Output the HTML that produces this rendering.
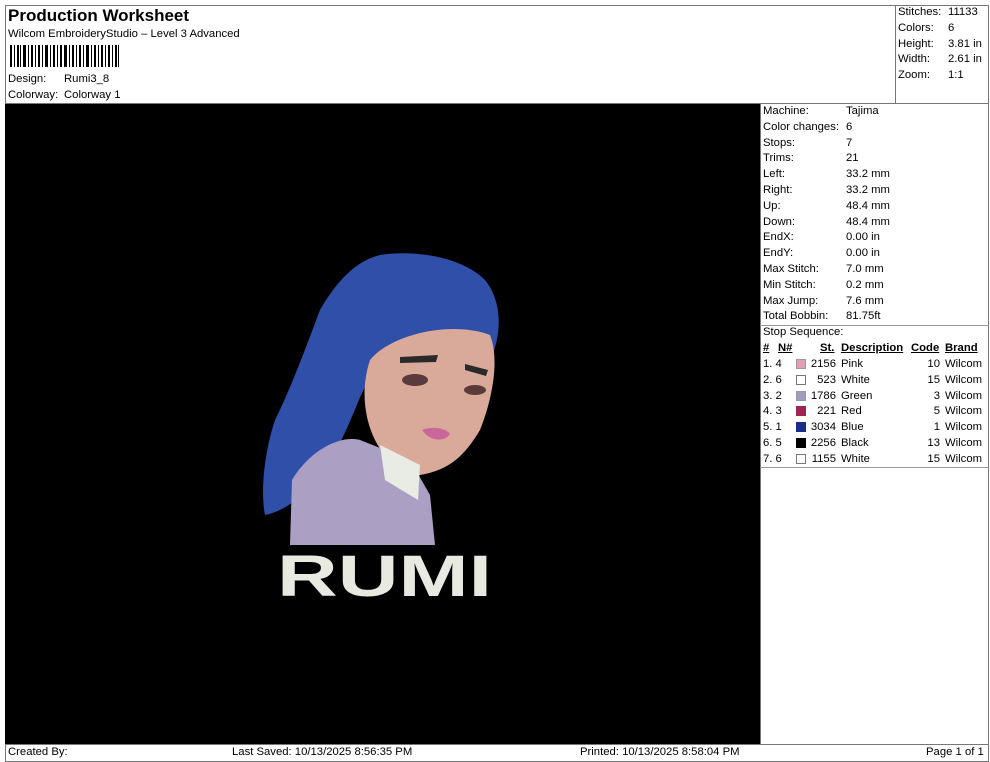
<!DOCTYPE html>
<html><head><meta charset="utf-8"><style>
*{margin:0;padding:0;box-sizing:border-box}
body{width:990px;height:762px;background:#fff;font-family:"Liberation Sans",sans-serif;color:#000;position:relative;overflow:hidden;font-size:11.3px}
.a{position:absolute;white-space:nowrap}
</style></head><body>
<div class="a" style="left:5px;top:5px;width:984px;height:757px;border:1px solid #777"></div>
<div class="a" style="left:8px;top:6px;font-size:17px;font-weight:bold">Production Worksheet</div>
<div class="a" style="left:8px;top:28px">Wilcom EmbroideryStudio – Level 3 Advanced</div>
<svg class="a" style="left:10px;top:45px" width="110" height="22">
<g fill="#000">
<rect x="0" y="0" width="2" height="22"/><rect x="4" y="0" width="1" height="22"/><rect x="7" y="0" width="2" height="22"/><rect x="10" y="0" width="1" height="22"/><rect x="13" y="0" width="3" height="22"/><rect x="18" y="0" width="1" height="22"/><rect x="21" y="0" width="2" height="22"/><rect x="25" y="0" width="1" height="22"/><rect x="28" y="0" width="2" height="22"/><rect x="32" y="0" width="1" height="22"/><rect x="35" y="0" width="3" height="22"/><rect x="40" y="0" width="1" height="22"/><rect x="43" y="0" width="2" height="22"/><rect x="47" y="0" width="1" height="22"/><rect x="50" y="0" width="2" height="22"/><rect x="54" y="0" width="3" height="22"/><rect x="59" y="0" width="1" height="22"/><rect x="62" y="0" width="2" height="22"/><rect x="66" y="0" width="1" height="22"/><rect x="69" y="0" width="2" height="22"/><rect x="73" y="0" width="1" height="22"/><rect x="76" y="0" width="3" height="22"/><rect x="81" y="0" width="1" height="22"/><rect x="84" y="0" width="2" height="22"/><rect x="88" y="0" width="1" height="22"/><rect x="91" y="0" width="2" height="22"/><rect x="95" y="0" width="1" height="22"/><rect x="98" y="0" width="2" height="22"/><rect x="102" y="0" width="1" height="22"/><rect x="105" y="0" width="2" height="22"/><rect x="108" y="0" width="1" height="22"/>
</g></svg>
<div class="a" style="left:8px;top:73px">Design:</div><div class="a" style="left:64px;top:73px">Rumi3_8</div>
<div class="a" style="left:8px;top:89px">Colorway:</div><div class="a" style="left:64px;top:89px">Colorway 1</div>
<div class="a" style="left:895px;top:5px;width:1px;height:98px;background:#777"></div>
<div class="a" style="left:5px;top:103px;width:984px;height:1px;background:#777"></div>
<div class="a" style="left:898px;top:5px;line-height:15.8px">Stitches:<br>Colors:<br>Height:<br>Width:<br>Zoom:</div>
<div class="a" style="left:948px;top:5px;line-height:15.8px">11133<br>6<br>3.81 in<br>2.61 in<br>1:1</div>
<div class="a" style="left:5px;top:104px;width:755px;height:640px;background:#000"></div>
<svg class="a" style="left:260px;top:250px" width="250" height="350">
<path d="M120 5 C150 0 200 5 225 30 C245 55 240 90 230 110 L110 130 C100 140 90 180 70 210 C50 240 30 260 5 265 C0 240 5 200 15 170 C30 140 45 100 60 60 C80 25 100 10 120 5Z" fill="#2f4fa8"/>
<path d="M110 110 C130 85 190 70 230 85 C240 110 232 150 220 180 C205 205 190 220 160 225 C140 225 125 210 115 190 C105 170 100 140 110 110Z" fill="#d9a99a"/>
<path d="M100 190 L150 210 L170 245 L175 295 L30 295 L32 230 C50 200 80 185 100 190Z" fill="#aba0c4"/>
<path d="M120 195 L160 215 L158 250 L125 230Z" fill="#e8ece4"/>
<path d="M140 107 L178 105 L176 112 L140 113Z M205 114 L228 120 L226 126 L205 120Z" fill="#2a2a2a"/>
<ellipse cx="155" cy="130" rx="13" ry="6" fill="#5a3a3a"/><ellipse cx="215" cy="140" rx="11" ry="5" fill="#5a3a3a"/>
<path d="M162 180 C172 176 186 178 190 184 C185 192 170 192 162 180Z" fill="#c9679a"/>
<text x="17" y="346" font-family="Liberation Sans" font-weight="bold" font-size="58" fill="#e8eae2" textLength="215" lengthAdjust="spacingAndGlyphs">RUMI</text>
</svg>
<div class="a" style="left:760px;top:104px;width:1px;height:640px;background:#777"></div>
<div class="a" style="left:763px;top:104px;line-height:15.8px">Machine:<br>Color changes:<br>Stops:<br>Trims:<br>Left:<br>Right:<br>Up:<br>Down:<br>EndX:<br>EndY:<br>Max Stitch:<br>Min Stitch:<br>Max Jump:<br>Total Bobbin:<br>Stop Sequence:</div>
<div class="a" style="left:846px;top:104px;line-height:15.8px">Tajima<br>6<br>7<br>21<br>33.2 mm<br>33.2 mm<br>48.4 mm<br>48.4 mm<br>0.00 in<br>0.00 in<br>7.0 mm<br>0.2 mm<br>7.6 mm<br>81.75ft</div>
<div class="a" style="left:760px;top:325px;width:229px;height:1px;background:#999"></div>
<div class="a" style="left:763px;top:341px;line-height:15.8px;font-weight:bold;text-decoration:underline">#</div>
<div class="a" style="left:778px;top:341px;line-height:15.8px;font-weight:bold;text-decoration:underline">N#</div>
<div class="a" style="left:820px;top:341px;line-height:15.8px;font-weight:bold;text-decoration:underline">St.</div>
<div class="a" style="left:841px;top:341px;line-height:15.8px;font-weight:bold;text-decoration:underline">Description</div>
<div class="a" style="left:911px;top:341px;line-height:15.8px;font-weight:bold;text-decoration:underline">Code</div>
<div class="a" style="left:945px;top:341px;line-height:15.8px;font-weight:bold;text-decoration:underline">Brand</div>
<div class="a" style="left:763px;top:357px;line-height:15.8px">1. 4<br>2. 6<br>3. 2<br>4. 3<br>5. 1<br>6. 5<br>7. 6</div>
<div class="a" style="left:796px;top:357px;line-height:15.8px;text-align:right;width:40px">2156<br>523<br>1786<br>221<br>3034<br>2256<br>1155</div>
<div class="a" style="left:841px;top:357px;line-height:15.8px">Pink<br>White<br>Green<br>Red<br>Blue<br>Black<br>White</div>
<div class="a" style="left:900px;top:357px;line-height:15.8px;text-align:right;width:40px">10<br>15<br>3<br>5<br>1<br>13<br>15</div>
<div class="a" style="left:945px;top:357px;line-height:15.8px">Wilcom<br>Wilcom<br>Wilcom<br>Wilcom<br>Wilcom<br>Wilcom<br>Wilcom</div>
<div class="a" style="left:796px;top:359px;width:10px;height:10px;background:#e0a0b4;border:1px solid #999"></div>
<div class="a" style="left:796px;top:375px;width:10px;height:10px;background:#fff;border:1px solid #777"></div>
<div class="a" style="left:796px;top:391px;width:10px;height:10px;background:#a29ac0;border:1px solid #999"></div>
<div class="a" style="left:796px;top:406px;width:10px;height:10px;background:#9e2456"></div>
<div class="a" style="left:796px;top:422px;width:10px;height:10px;background:#1a2d8c"></div>
<div class="a" style="left:796px;top:438px;width:10px;height:10px;background:#000"></div>
<div class="a" style="left:796px;top:454px;width:10px;height:10px;background:#fff;border:1px solid #777"></div>
<div class="a" style="left:760px;top:467px;width:229px;height:1px;background:#999"></div>
<div class="a" style="left:5px;top:744px;width:984px;height:1px;background:#777"></div>
<div class="a" style="left:8px;top:746px">Created By:</div>
<div class="a" style="left:232px;top:746px">Last Saved: 10/13/2025 8:56:35 PM</div>
<div class="a" style="left:580px;top:746px">Printed: 10/13/2025 8:58:04 PM</div>
<div class="a" style="left:926px;top:746px">Page 1 of 1</div>
</body></html>
